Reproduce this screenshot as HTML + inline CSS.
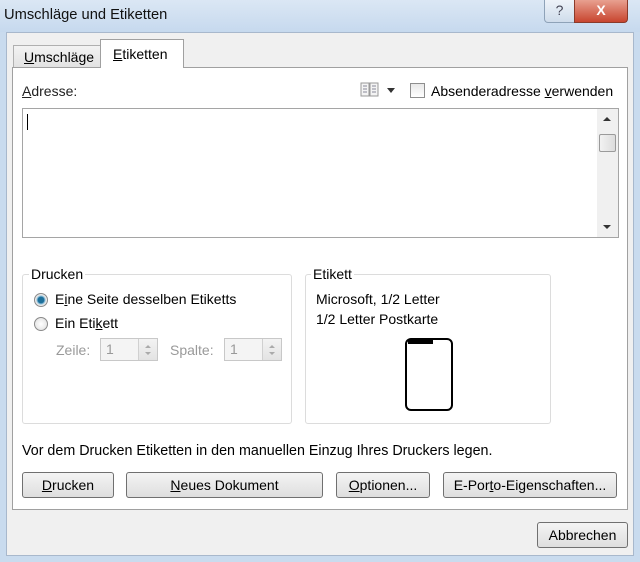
<!DOCTYPE html>
<html><head><meta charset="utf-8"><style>
*{box-sizing:border-box;margin:0;padding:0}
body{width:640px;height:562px;overflow:hidden;font-family:"Liberation Sans",sans-serif;font-size:14px;color:#000;background:#c9dbee;position:relative}
.a{position:absolute;white-space:nowrap}
u{text-decoration:underline}
.btn{position:absolute;height:26px;border:1px solid #707070;border-radius:3px;background:linear-gradient(#f4f4f4,#dedede);text-align:center;line-height:24px;font-size:14px;white-space:nowrap}
.grp{position:absolute;border:1px solid #dcdcdc;border-radius:3px}
.grp .lg{position:absolute;top:-9px;left:6px;background:#fff;padding:0 2px;font-size:14px}
.radio{position:absolute;width:14px;height:14px;border-radius:50%;border:1px solid #8a8a8a;background:radial-gradient(#fff,#ddd)}
.spin{position:absolute;width:58px;height:23px;border:1px solid #c8c8c8;background:#f4f4f4;color:#999;padding-left:5px;line-height:21px}
.spin:after{content:"";position:absolute;right:0;top:0;width:18px;height:21px;border-left:1px solid #d0d0d0;background:linear-gradient(#f3f3f3,#e3e3e3)}
.spin svg{position:absolute;right:4px;top:3px;z-index:1}
</style></head><body>
<div class="a" style="left:0;top:0;width:640px;height:32px;background:linear-gradient(#dbe7f4,#c6d9ee)"></div>
<div class="a" style="left:4px;top:7px;font-size:14.7px;color:#111">Umschläge und Etiketten</div>
<div class="a" style="left:544px;top:0;width:31px;height:23px;border:1px solid #8ea2b8;border-top:none;border-radius:0 0 0 4px;background:linear-gradient(#eef3f9,#cfdceb);text-align:center;font-size:14px;color:#445;line-height:21px">?</div>
<div class="a" style="left:574px;top:0;width:54px;height:23px;border:1px solid #8a3a2a;border-top:none;border-radius:0 0 4px 0;background:linear-gradient(#e8a090,#c8452f);text-align:center;color:#fff;font-weight:bold;font-size:14px;line-height:21px">X</div>
<div class="a" style="left:6px;top:32px;width:628px;height:524px;background:#f0f0f0;border:1px solid #a8b8cc"></div>
<div class="a" style="left:13px;top:45px;width:88px;height:22px;border:1px solid #b0b0b0;border-bottom:none;background:linear-gradient(#f3f3f3,#e2e2e2);font-size:14px;padding:3px 0 0 10px"><u>U</u>mschläge</div>
<div class="a" style="left:100px;top:39px;width:84px;height:29px;border:1px solid #a0a0a0;border-bottom:none;background:#fff;font-size:14px;padding:6px 0 0 12px;z-index:2"><u>E</u>tiketten</div>
<div class="a" style="left:12px;top:67px;width:616px;height:443px;background:#fff;border:1px solid #a0a0a0"></div>
<div class="a" style="left:22px;top:83px;color:#222"><u>A</u>dresse:</div>
<svg class="a" style="left:360px;top:82px" width="36" height="16"><rect x="1" y="1" width="8" height="13" fill="#f4f4f4" stroke="#999"/><rect x="10" y="1" width="8" height="13" fill="#f4f4f4" stroke="#999"/><path d="M3 4h4M3 7h4M3 10h4M12 4h4M12 7h4M12 10h4" stroke="#889"/><path d="M27 6h8l-4 5z" fill="#333"/></svg>
<div class="a" style="left:410px;top:83px;width:15px;height:15px;border:1px solid #8e8e8e;background:linear-gradient(#e8e8e8,#fff)"></div>
<div class="a" style="left:431px;top:83px">Absenderadresse <u>v</u>erwenden</div>
<div class="a" style="left:22px;top:108px;width:597px;height:130px;border:1px solid #a5a5a5;background:#fff"></div>
<div class="a" style="left:27px;top:114px;width:1px;height:16px;background:#000"></div>
<div class="a" style="left:597px;top:109px;width:21px;height:128px;background:#f0f0f0"></div>
<div class="a" style="left:599px;top:134px;width:17px;height:18px;border:1px solid #9a9a9a;border-radius:2px;background:linear-gradient(90deg,#f2f2f2,#dcdcdc)"></div>
<svg class="a" style="left:600px;top:116px" width="14" height="6"><path d="M3 5h8L7 1z" fill="#333"/></svg>
<svg class="a" style="left:600px;top:224px" width="14" height="6"><path d="M3 1h8L7 5z" fill="#333"/></svg>
<div class="grp" style="left:22px;top:274px;width:270px;height:150px"><span class="lg">Drucken</span></div>
<div class="radio" style="left:34px;top:293px;background:radial-gradient(#1d6f9a 35%,#7fb6d4 45%,#eaeaea 60%)"></div>
<div class="a" style="left:55px;top:291px">E<u>i</u>ne Seite desselben Etiketts</div>
<div class="radio" style="left:34px;top:317px"></div>
<div class="a" style="left:55px;top:315px">Ein Eti<u>k</u>ett</div>
<div class="a" style="left:56px;top:342px;color:#999">Zeile:</div>
<div class="spin" style="left:100px;top:338px">1<svg width="10" height="16"><path d="M2 6h6L5 3z M2 10h6l-3 3z" fill="#aaa"/></svg></div>
<div class="a" style="left:170px;top:342px;color:#999">Spalte:</div>
<div class="spin" style="left:224px;top:338px">1<svg width="10" height="16"><path d="M2 6h6L5 3z M2 10h6l-3 3z" fill="#aaa"/></svg></div>
<div class="grp" style="left:305px;top:274px;width:246px;height:150px"><span class="lg" style="left:5px">Etikett</span></div>
<div class="a" style="left:316px;top:291px">Microsoft, 1/2 Letter</div>
<div class="a" style="left:316px;top:311px">1/2 Letter Postkarte</div>
<div class="a" style="left:405px;top:338px;width:48px;height:73px;border:2px solid #000;border-radius:6px"></div>
<div class="a" style="left:408px;top:339px;width:25px;height:5px;background:#000"></div>
<div class="a" style="left:22px;top:443px;font-size:14.3px">Vor dem Drucken Etiketten in den manuellen Einzug Ihres Druckers legen.</div>
<div class="btn" style="left:22px;top:472px;width:92px"><u>D</u>rucken</div>
<div class="btn" style="left:126px;top:472px;width:197px"><u>N</u>eues Dokument</div>
<div class="btn" style="left:336px;top:472px;width:94px"><u>O</u>ptionen...</div>
<div class="btn" style="left:443px;top:472px;width:174px">E-Por<u>t</u>o-Eigenschaften...</div>
<div class="btn" style="left:537px;top:522px;width:91px">Abbrechen</div>
</body></html>
